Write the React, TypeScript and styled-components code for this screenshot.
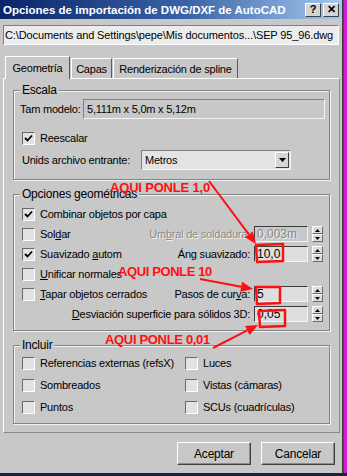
import React from "react";
import styled, { createGlobalStyle } from "styled-components";

const Global = createGlobalStyle`
  html, body { margin: 0; padding: 0; background: #1b2433; }
  body { font-family: "Liberation Sans", Arial, sans-serif; }
  #root { width: 347px; height: 476px; }
`;

const GRAY = "#c8c8c8";
const FS = "11px";
const LS = "-0.22px";

const Screen = styled.div`
  width: 347px;
  height: 476px;
  display: flex;
  flex-direction: column;
  background: #1b2433;
  overflow: hidden;
`;

const TopArea = styled.div`
  display: flex;
  height: 473px;
`;

const EdgeStrip = styled.div`
  width: 4px;
  background: linear-gradient(90deg, #6a3a6a 0 1px, #d81cd0 1px);
`;

const Dialog = styled.div`
  position: relative;
  width: 343px;
  height: 473px;
  box-sizing: border-box;
  background: ${GRAY};
  border-right: 1px solid #3a3a3a;
  display: flex;
  flex-direction: column;
  font-size: ${FS};
  letter-spacing: ${LS};
  color: #000;
`;

const TitleBar = styled.div`
  height: 19px;
  display: flex;
  align-items: center;
  padding: 0 3px 0 3px;
  background: linear-gradient(90deg, #0a246a 0%, #3a64a8 55%, #a6caf0 100%);
`;

const TitleText = styled.div`
  flex: 1;
  color: #fff;
  font-weight: bold;
  font-size: 11.5px;
  letter-spacing: 0;
  white-space: nowrap;
`;

const TitleButton = styled.div`
  width: 16px;
  height: 14px;
  box-sizing: border-box;
  margin-left: 2px;
  background: #d4d4d4;
  border: 1px solid;
  border-color: #fff #404040 #404040 #fff;
  display: flex;
  align-items: center;
  justify-content: center;
  font-weight: bold;
  font-size: 11px;
  letter-spacing: 0;
  line-height: 1;
`;

const PathField = styled.div`
  margin: 6px 0 0 3px;
  width: 336px;
  height: 20px;
  box-sizing: border-box;
  border: 1px solid;
  border-color: #808080 #fff #fff #808080;
  background: #ececec;
  font-size: 11px;
  letter-spacing: -0.12px;
  line-height: 18px;
  padding-left: 1px;
  white-space: nowrap;
  overflow: hidden;
`;

const TabStrip = styled.div`
  margin: 10px 0 0 5px;
  height: 23px;
  display: flex;
  align-items: flex-end;
`;

const Tab = styled.div<{ $active?: boolean; $w: number }>`
  box-sizing: border-box;
  width: ${(p) => p.$w}px;
  height: ${(p) => (p.$active ? 23 : 20)}px;
  margin-left: ${(p) => (p.$active ? 0 : 1)}px;
  border: 1px solid;
  border-bottom: none;
  border-color: #fff #5a5a5a #5a5a5a #fff;
  display: flex;
  align-items: center;
  justify-content: center;
  white-space: nowrap;
  background: ${GRAY};
  position: relative;
  top: ${(p) => (p.$active ? 1 : 0)}px;
`;

const Panel = styled.div`
  margin: 0 0 0 3px;
  width: 337px;
  height: 355px;
  box-sizing: border-box;
  border: 1px solid;
  border-color: #fff #8a8a8a #8a8a8a #fff;
  padding: 4px 9px 0 9px;
  display: flex;
  flex-direction: column;
`;

const Group = styled.fieldset<{ $mt?: number; $pt?: number; $pb?: number }>`
  margin: ${(p) => p.$mt ?? 0}px 0 0 0;
  padding: ${(p) => p.$pt ?? 2}px 4px ${(p) => p.$pb ?? 9}px 6px;
  border: 1px solid #858585;
  box-shadow: inset 1px 1px 0 #f2f2f2, 1px 1px 0 #f2f2f2;
  min-width: 0;
`;

const Legend = styled.legend`
  padding: 0 2px;
  font-size: 12px;
  line-height: 14px;
  background: ${GRAY};
`;

const Row = styled.div<{ $h: number; $mt?: number; $indent?: number }>`
  display: flex;
  align-items: center;
  height: ${(p) => p.$h}px;
  margin-top: ${(p) => p.$mt ?? 0}px;
  padding-left: ${(p) => p.$indent ?? 0}px;
  white-space: nowrap;
`;

const Label = styled.span<{ $disabled?: boolean }>`
  color: ${(p) => (p.$disabled ? "#8a8a8a" : "#000")};
  text-shadow: ${(p) => (p.$disabled ? "1px 1px 0 #f4f4f4" : "none")};
  white-space: nowrap;
`;

const U = styled.span`
  text-decoration: underline;
`;

const ReadField = styled.div<{ $w: number }>`
  margin-left: auto;
  width: ${(p) => p.$w}px;
  height: 20px;
  box-sizing: border-box;
  border: 1px solid;
  border-color: #808080 #f4f4f4 #f4f4f4 #808080;
  line-height: 18px;
  padding-left: 3px;
`;

const Combo = styled.div`
  margin-left: auto;
  margin-right: 34px;
  width: 150px;
  height: 20px;
  box-sizing: border-box;
  border: 1px solid;
  border-color: #808080 #f4f4f4 #f4f4f4 #808080;
  background: #e4e4e4;
  display: flex;
  align-items: center;
  justify-content: space-between;
  padding: 0 1px 0 3px;
`;

const ComboButton = styled.div`
  width: 14px;
  height: 16px;
  box-sizing: border-box;
  background: #d6d6d6;
  border: 1px solid;
  border-color: #fff #404040 #404040 #fff;
  display: flex;
  align-items: center;
  justify-content: center;
`;

const Box = styled.span`
  width: 13px;
  height: 13px;
  box-sizing: border-box;
  border: 1px solid;
  border-color: #6a6a6a #fff #fff #6a6a6a;
  background: #e2e2e2;
  display: inline-flex;
  align-items: center;
  justify-content: center;
  flex: none;
`;

const CheckLine = styled.div<{ $pl?: number }>`
  display: flex;
  align-items: center;
  gap: 5px;
  padding-left: ${(p) => p.$pl ?? 2}px;
  white-space: nowrap;
`;

const RightPart = styled.div`
  margin-left: auto;
  margin-right: 2px;
  display: flex;
  align-items: center;
`;

const NumField = styled.div<{ $disabled?: boolean }>`
  margin-left: 4px;
  width: 54px;
  height: 16px;
  box-sizing: border-box;
  border: 1px solid;
  border-color: #3c3c3c #f4f4f4 #f4f4f4 #3c3c3c;
  background: ${(p) => (p.$disabled ? GRAY : "#dedede")};
  color: ${(p) => (p.$disabled ? "#8a8a8a" : "#000")};
  text-shadow: ${(p) => (p.$disabled ? "1px 1px 0 #f4f4f4" : "none")};
  font-size: 12px;
  letter-spacing: 0;
  line-height: 14px;
  padding-left: 2px;
`;

const Spinner = styled.div`
  margin-left: 4px;
  width: 11px;
  height: 16px;
  display: flex;
  flex-direction: column;
`;

const SpinHalf = styled.div`
  flex: 1;
  box-sizing: border-box;
  background: #dcdcdc;
  border: 1px solid;
  border-color: #fff #6a6a6a #6a6a6a #fff;
  display: flex;
  align-items: center;
  justify-content: center;
`;

const IncludeGrid = styled.div`
  display: grid;
  grid-template-columns: 163px 1fr;
  grid-auto-rows: 22px;
  align-items: center;
`;

const Footer = styled.div`
  margin-top: 9px;
  display: flex;
  justify-content: flex-end;
  gap: 10px;
  padding-right: 7px;
`;

const Button = styled.div`
  width: 74px;
  height: 23px;
  box-sizing: border-box;
  border: 1px solid;
  border-color: #fff #404040 #404040 #fff;
  box-shadow: inset -1px -1px 0 #8a8a8a;
  display: flex;
  align-items: center;
  justify-content: center;
  font-size: 12px;
`;

const Overlay = styled.svg`
  position: absolute;
  left: 0;
  top: 0;
  width: 343px;
  height: 473px;
  pointer-events: none;
  overflow: visible;
`;

const Check = ({ checked }: { checked?: boolean }) => (
  <Box>
    {checked && (
      <svg width="9" height="9" viewBox="0 0 9 9">
        <path d="M1 4 L3.5 6.5 L8 1.5" stroke="#000" strokeWidth="1.8" fill="none" />
      </svg>
    )}
  </Box>
);

const Tri = () => (
  <svg width="7" height="4" viewBox="0 0 7 4">
    <path d="M0 0 L7 0 L3.5 4 Z" fill="#000" />
  </svg>
);

const Spin = () => (
  <Spinner>
    <SpinHalf>
      <svg width="5" height="3" viewBox="0 0 5 3">
        <path d="M0 3 L2.5 0 L5 3 Z" fill="#000" />
      </svg>
    </SpinHalf>
    <SpinHalf>
      <svg width="5" height="3" viewBox="0 0 5 3">
        <path d="M0 0 L5 0 L2.5 3 Z" fill="#000" />
      </svg>
    </SpinHalf>
  </Spinner>
);

const RED = "#ff1010";

const Arrow = ({ x1, y1, x2, y2 }: { x1: number; y1: number; x2: number; y2: number }) => {
  const a = Math.atan2(y2 - y1, x2 - x1);
  const L = 12;
  const W = 5;
  const bx = x2 - L * Math.cos(a);
  const by = y2 - L * Math.sin(a);
  const px = -Math.sin(a) * W;
  const py = Math.cos(a) * W;
  return (
    <g>
      <line x1={x1} y1={y1} x2={bx} y2={by} stroke={RED} strokeWidth="2" />
      <polygon points={`${x2},${y2} ${bx + px},${by + py} ${bx - px},${by - py}`} fill={RED} />
    </g>
  );
};

const Annotations = () => (
  <Overlay viewBox="0 0 343 473">
    <g fontFamily="'Liberation Sans', Arial, sans-serif" fontWeight="bold" fontSize="13" fill={RED}>
      <text x="110" y="192" textLength="100">AQUI PONLE 1,0</text>
      <text x="118" y="276" textLength="94">AQUI PONLE 10</text>
      <text x="105" y="344" textLength="105">AQUI PONLE 0,01</text>
    </g>
    <Arrow x1={209} y1={181} x2={256} y2={244} />
    <Arrow x1={200} y1={279} x2={253} y2={289} />
    <Arrow x1={213} y1={348} x2={258} y2={325} />
    <g fill="none" stroke={RED} strokeWidth="2.5" strokeLinejoin="round">
      <path d="M256 245 L283 244 L283 261 L257 262 Z" />
      <path d="M256 287 L280 287 L280 303 L257 304 Z" />
      <path d="M259 311 L285 310 L285 326 L260 327 Z" />
    </g>
  </Overlay>
);

export default function App() {
  return (
    <>
      <Global />
      <Screen>
        <TopArea>
          <Dialog>
            <TitleBar>
              <TitleText>Opciones de importación de DWG/DXF de AutoCAD</TitleText>
              <TitleButton>?</TitleButton>
              <TitleButton>✕</TitleButton>
            </TitleBar>
            <PathField>C:\Documents and Settings\pepe\Mis documentos...\SEP 95_96.dwg</PathField>
            <TabStrip>
              <Tab $active $w={65}>Geometría</Tab>
              <Tab $w={41}>Capas</Tab>
              <Tab $w={125}>Renderización de spline</Tab>
            </TabStrip>
            <Panel>
              <Group $pt={2} $pb={9}>
                <Legend>Escala</Legend>
                <Row $h={20}>
                  <Label>Tam modelo:</Label>
                  <ReadField $w={242}>5,111m x 5,0m x 5,12m</ReadField>
                </Row>
                <Row $h={16} $mt={11}>
                  <CheckLine>
                    <Check checked />
                    <Label>Reescalar</Label>
                  </CheckLine>
                </Row>
                <Row $h={20} $mt={4} $indent={2}>
                  <Label>Unids archivo entrante:</Label>
                  <Combo>
                    <span>Metros</span>
                    <ComboButton>
                      <Tri />
                    </ComboButton>
                  </Combo>
                </Row>
              </Group>
              <Group $mt={7} $pt={3} $pb={6}>
                <Legend>Opciones geométricas</Legend>
                <Row $h={20}>
                  <CheckLine>
                    <Check checked />
                    <Label>Combinar objetos por capa</Label>
                  </CheckLine>
                </Row>
                <Row $h={20}>
                  <CheckLine>
                    <Check />
                    <Label>
                      Sol<U>d</U>ar
                    </Label>
                  </CheckLine>
                  <RightPart>
                    <Label $disabled>
                      Um<U>b</U>ral de soldadura:
                    </Label>
                    <NumField $disabled>0,003m</NumField>
                    <Spin />
                  </RightPart>
                </Row>
                <Row $h={20}>
                  <CheckLine>
                    <Check checked />
                    <Label>
                      Suavizado <U>a</U>utom
                    </Label>
                  </CheckLine>
                  <RightPart>
                    <Label>Áng suavizado:</Label>
                    <NumField>10,0</NumField>
                    <Spin />
                  </RightPart>
                </Row>
                <Row $h={20}>
                  <CheckLine>
                    <Check />
                    <Label>
                      <U>U</U>nificar normales
                    </Label>
                  </CheckLine>
                </Row>
                <Row $h={20}>
                  <CheckLine>
                    <Check />
                    <Label>
                      <U>T</U>apar objetos cerrados
                    </Label>
                  </CheckLine>
                  <RightPart>
                    <Label>
                      Pasos de cur<U>v</U>a:
                    </Label>
                    <NumField>5</NumField>
                    <Spin />
                  </RightPart>
                </Row>
                <Row $h={20}>
                  <RightPart>
                    <Label>
                      <U>D</U>esviación superficie para sólidos 3D:
                    </Label>
                    <NumField>0,05</NumField>
                    <Spin />
                  </RightPart>
                </Row>
              </Group>
              <Group $mt={7} $pt={0} $pb={5}>
                <Legend>Incluir</Legend>
                <IncludeGrid>
                  <CheckLine>
                    <Check />
                    <Label>Referencias externas (refsX)</Label>
                  </CheckLine>
                  <CheckLine>
                    <Check />
                    <Label>Luces</Label>
                  </CheckLine>
                  <CheckLine>
                    <Check />
                    <Label>Sombreados</Label>
                  </CheckLine>
                  <CheckLine>
                    <Check />
                    <Label>Vistas (cámaras)</Label>
                  </CheckLine>
                  <CheckLine>
                    <Check />
                    <Label>Puntos</Label>
                  </CheckLine>
                  <CheckLine>
                    <Check />
                    <Label>SCUs (cuadrículas)</Label>
                  </CheckLine>
                </IncludeGrid>
              </Group>
            </Panel>
            <Footer>
              <Button>Aceptar</Button>
              <Button>Cancelar</Button>
            </Footer>
            <Annotations />
          </Dialog>
          <EdgeStrip />
        </TopArea>
      </Screen>
    </>
  );
}
